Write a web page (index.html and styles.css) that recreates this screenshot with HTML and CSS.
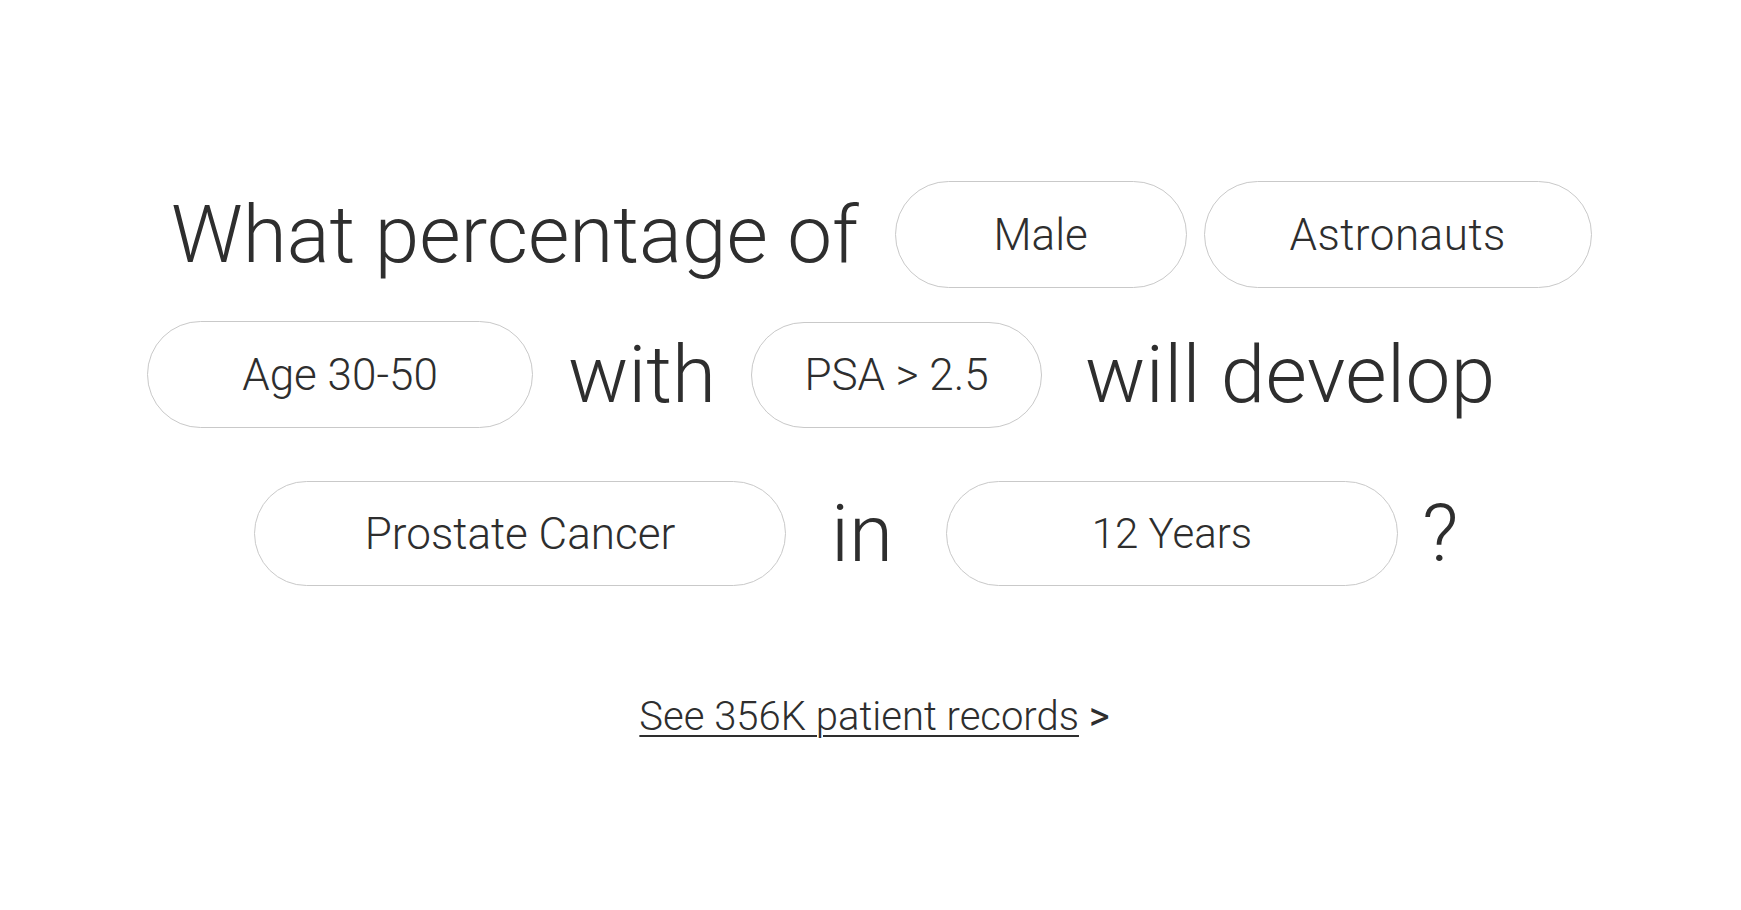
FILE: index.html
```html
<!DOCTYPE html>
<html lang="en">
<head>
<meta charset="utf-8">
<title>Patient records query</title>
<link rel="stylesheet" href="styles.css">
</head>
<body>
<main class="page">
  <section class="question">
    <div class="line line-1">
      <span class="word word-what">What percentage of</span>
      <button class="pill pill-male">Male</button>
      <button class="pill pill-astro">Astronauts</button>
    </div>
    <div class="line line-2">
      <button class="pill pill-age">Age 30-50</button>
      <span class="word word-with">with</span>
      <button class="pill pill-psa">PSA &gt; 2.5</button>
      <span class="word word-will">will develop</span>
    </div>
    <div class="line line-3">
      <button class="pill pill-cancer">Prostate Cancer</button>
      <span class="word word-in">in</span>
      <button class="pill pill-years">12 Years</button>
      <span class="word word-q">?</span>
    </div>
  </section>
  <p class="records"><a class="records-link" href="#">See 356K patient records</a> <span class="records-arrow">&gt;</span></p>
</main>
</body>
</html>
```

FILE: styles.css
```css
html, body {
  margin: 0;
  padding: 0;
  background: #ffffff;
}

body {
  font-family: Roboto, "Liberation Sans", sans-serif;
  font-weight: 300;
  color: #2e2e2e;
}

.page {
  width: 1741px;
  height: 910px;
  box-sizing: border-box;
  padding-top: 181px;
}

.question {
  display: flex;
  flex-direction: column;
}

.line {
  display: flex;
  align-items: center;
  height: 107px;
}

.line-1 { padding-left: 171px; }
.line-2 { padding-left: 147px; margin-top: 33px; }
.line-3 { padding-left: 254px; margin-top: 52px; }

.word {
  font-size: 80px;
  line-height: 1;
  white-space: nowrap;
}

.pill {
  box-sizing: border-box;
  height: 107px;
  border: 1px solid #c9c9c9;
  border-radius: 54px;
  background: #ffffff;
  font-family: Roboto, "Liberation Sans", sans-serif;
  font-weight: 300;
  font-size: 44px;
  color: #2e2e2e;
  padding: 0;
  display: flex;
  align-items: center;
  justify-content: center;
  flex: none;
}

.pill-male { width: 292px; margin-left: 36px; }
.pill-astro { width: 388px; margin-left: 17px; letter-spacing: 0.5px; }

.pill-age { width: 386px; }
.word-with { margin-left: 35px; }
.pill-psa { width: 291px; margin-left: 35px; align-self: flex-end; height: 106px; }
.word-will { margin-left: 43px; letter-spacing: 0.4px; }

.pill-cancer { width: 532px; height: 105px; }
.word-in { margin-left: 45px; }
.pill-years { width: 452px; height: 105px; margin-left: 53px; font-size: 42px; }
.word-q { margin-left: 24px; }

.records {
  margin: 110px 0 0;
  padding-left: 8px;
  text-align: center;
  font-size: 40px;
  line-height: 1;
}

.records-link {
  color: #2e2e2e;
  text-decoration: underline;
  text-decoration-thickness: 2px;
  text-underline-offset: 5px;
}

.records-arrow {
  font-weight: 400;
  color: #2e2e2e;
}
```
